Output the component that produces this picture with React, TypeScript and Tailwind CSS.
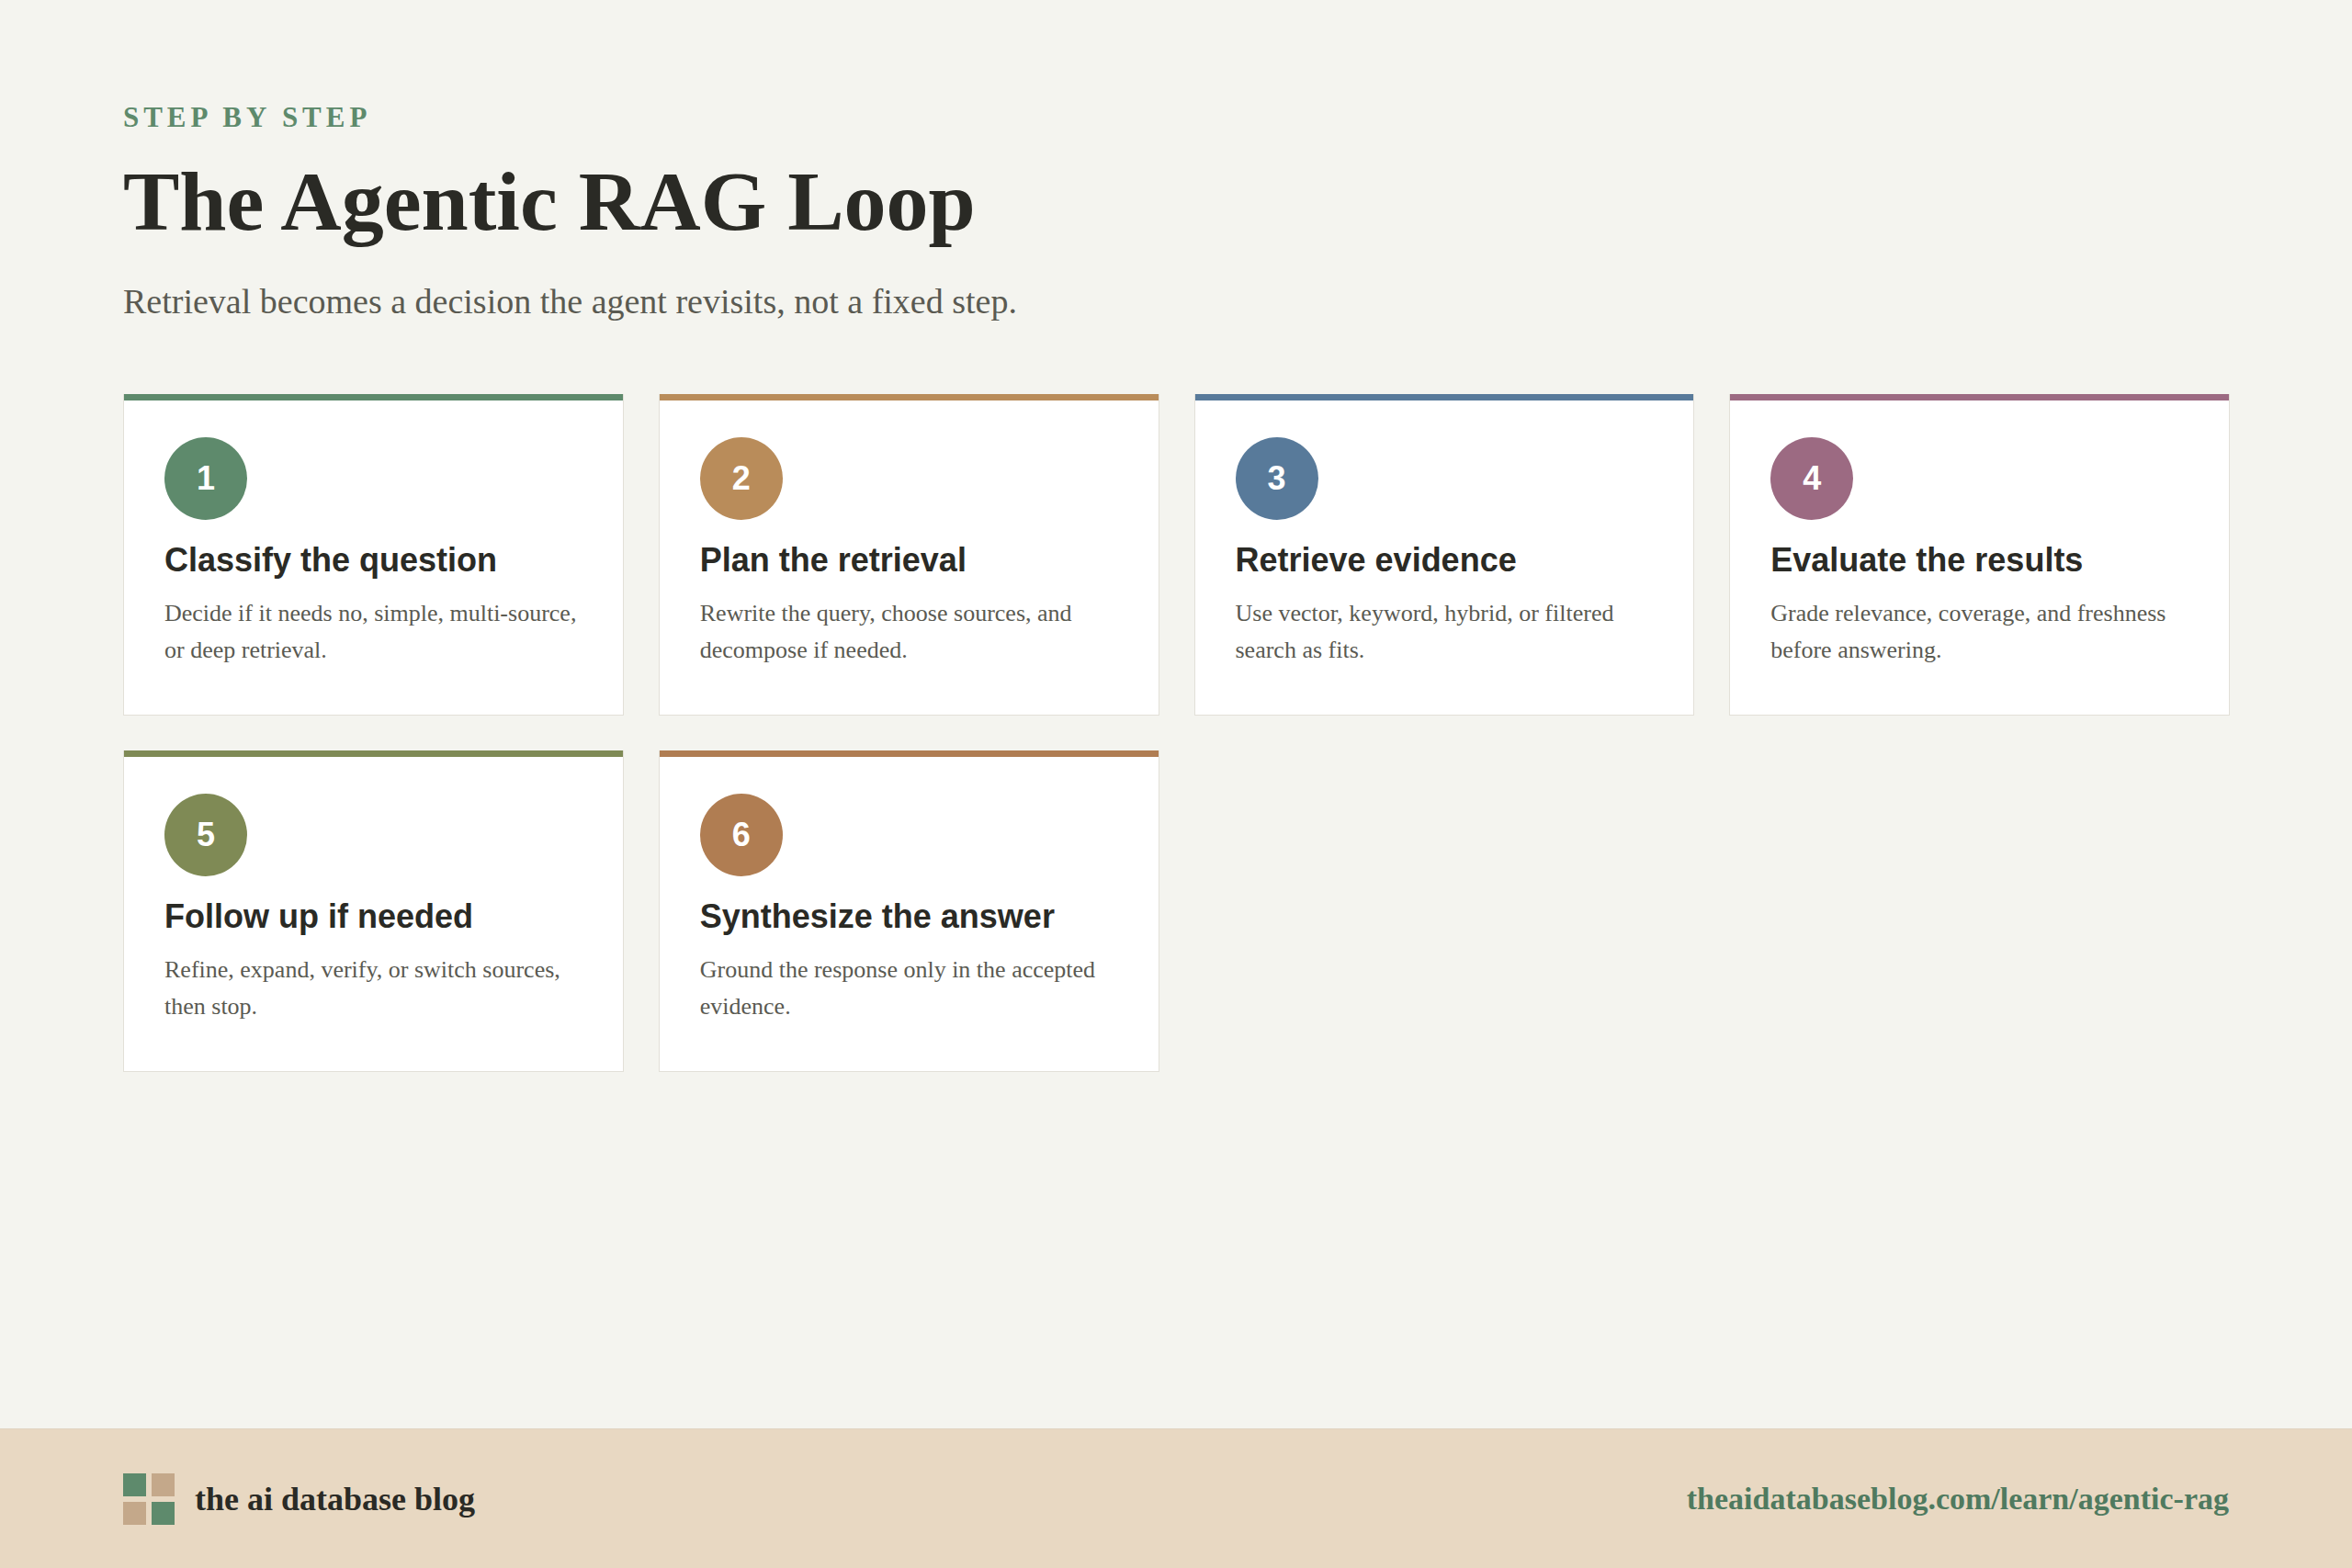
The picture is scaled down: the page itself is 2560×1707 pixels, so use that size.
import React from "react";

const steps = [
  { n: "1", c: "#5e8a6c", t: "Classify the question", d: "Decide if it needs no, simple, multi-source, or deep retrieval." },
  { n: "2", c: "#b98c5a", t: "Plan the retrieval", d: "Rewrite the query, choose sources, and decompose if needed." },
  { n: "3", c: "#587a9a", t: "Retrieve evidence", d: "Use vector, keyword, hybrid, or filtered search as fits." },
  { n: "4", c: "#9c6a82", t: "Evaluate the results", d: "Grade relevance, coverage, and freshness before answering." },
  { n: "5", c: "#7f8a55", t: "Follow up if needed", d: "Refine, expand, verify, or switch sources, then stop." },
  { n: "6", c: "#b07d52", t: "Synthesize the answer", d: "Ground the response only in the accepted evidence." },
];

const serif = { fontFamily: '"Liberation Serif", "Times New Roman", serif' };
const sans = { fontFamily: '"Liberation Sans", Arial, sans-serif' };

export default function App() {
  return (
    <div className="w-[2560px] h-[1707px] bg-[#f4f4ef] flex flex-col" style={serif}>
      <div className="flex-1 px-[134px] pt-[112px]">
        <div className="text-[31px] font-bold tracking-[0.16em] text-[#5e8a6c] leading-none">STEP BY STEP</div>
        <h1 className="mt-[30px] text-[92px] font-bold text-[#2a2a25] leading-none">The Agentic RAG Loop</h1>
        <p className="mt-[44px] text-[38px] text-[#5a5a52] leading-none">Retrieval becomes a decision the agent revisits, not a fixed step.</p>
        <div className="mt-[82px] grid grid-cols-4 gap-[38px] w-[2293px]">
          {steps.map((s) => (
            <div key={s.n} className="h-[350px] bg-white border border-[#e2e0d8] border-t-0 flex flex-col">
              <div className="h-[7px]" style={{ background: s.c }} />
              <div className="pl-[44px] pr-[40px] pt-[40px]">
                <div className="w-[90px] h-[90px] rounded-full flex items-center justify-center text-white text-[36px] font-bold" style={{ ...sans, background: s.c }}>{s.n}</div>
                <div className="mt-[26px] text-[36px] font-bold text-[#2a2a25] leading-none" style={sans}>{s.t}</div>
                <div className="mt-[20px] text-[26px] leading-[40px] text-[#5a5a52]">{s.d}</div>
              </div>
            </div>
          ))}
        </div>
      </div>
      <div className="h-[152px] bg-[#e8d8c2] border-t border-[#e0d4c2] px-[134px] flex items-center justify-between">
        <div className="flex items-center gap-[22px]">
          <div className="grid grid-cols-2 gap-[6px]">
            <div className="w-[25px] h-[25px] bg-[#5e8a6c]" />
            <div className="w-[25px] h-[25px] bg-[#c4a88a]" />
            <div className="w-[25px] h-[25px] bg-[#c4a88a]" />
            <div className="w-[25px] h-[25px] bg-[#5e8a6c]" />
          </div>
          <div className="text-[36px] font-bold text-[#2a2a25]">the ai database blog</div>
        </div>
        <div className="text-[34px] font-bold text-[#4f7a5f]">theaidatabaseblog.com/learn/agentic-rag</div>
      </div>
    </div>
  );
}
